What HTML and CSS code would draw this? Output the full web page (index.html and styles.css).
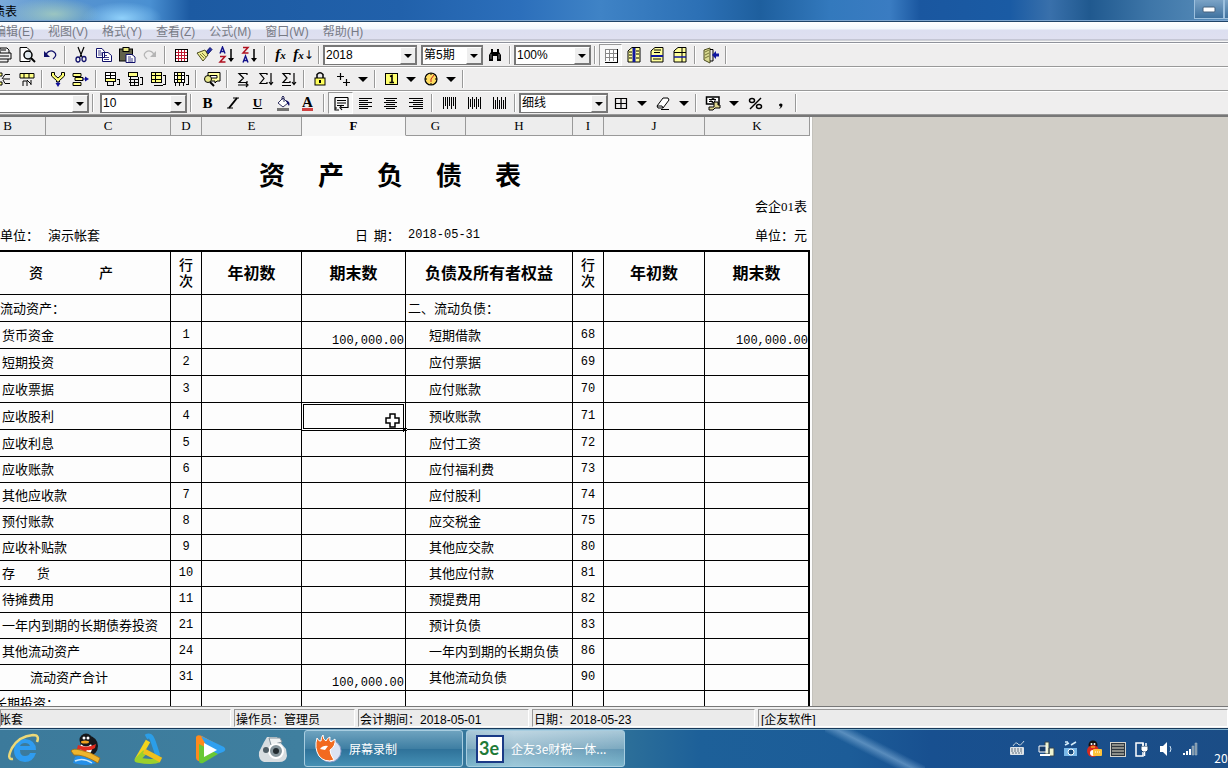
FILE: index.html
```html
<!DOCTYPE html>
<html lang="zh-CN">
<head>
<meta charset="utf-8">
<title>资产负债表</title>
<link rel="stylesheet" href="styles.css">
</head>
<body>
<header class="titlebar">
  <span class="titlebar-text">债表</span>
  <span class="window-buttons">
    <button class="winbtn" aria-label="最小化"><svg width="14" height="8" viewBox="0 0 14 8"><rect x="1" y="2" width="12" height="5" rx="1" fill="#fff" stroke="#45607d"/></svg></button>
    <button class="winbtn" aria-label="最大化"><svg width="14" height="14" viewBox="0 0 14 14"><path d="M1 5V12H12V3H4" fill="#fff" stroke="#45607d"/><rect x="4" y="6" width="5" height="4" fill="#45607d"/></svg></button>
  </span>
</header>
<nav class="menubar">
  <button>编辑(E)</button><button>视图(V)</button><button>格式(Y)</button><button>查看(Z)</button><button>公式(M)</button><button>窗口(W)</button><button>帮助(H)</button>
</nav>

<div class="toolbar">
  <button class="tool" aria-label="打印"><svg viewBox="0 0 18 18"><path d="M5 7V2H12L14 4V7M2 7H16V13H2ZM4 10H14M4 13V16H13V13M6 4H11" fill="none" stroke="#000"/></svg></button>
  <button class="tool" aria-label="打印预览"><svg viewBox="0 0 18 18"><path d="M2 1.500H9L12 4.500V15.500H2Z" fill="#fff" stroke="#000"/><circle cx="10" cy="9" r="4" fill="#dfe8ee" stroke="#000" stroke-width="1.500"/><path d="M13 12L17 16" stroke="#000" stroke-width="2"/></svg></button>
  <button class="tool" aria-label="撤销"><svg viewBox="0 0 18 18"><path d="M5 8Q9 3 13 6T12 13" fill="none" stroke="#10106a" stroke-width="1.300"/><path d="M3 5V11H9Z" fill="#10106a"/></svg></button>
  <i class="sep"></i>
  <button class="tool" aria-label="剪切"><svg viewBox="0 0 18 18"><path d="M6 1L10 11M12 1L8 11" stroke="#000" stroke-width="1.200"/><g fill="none" stroke="#10106a" stroke-width="1.300"><ellipse cx="6" cy="13.500" rx="2" ry="2.500"/><ellipse cx="12" cy="13" rx="2" ry="2.500"/></g></svg></button>
  <button class="tool" aria-label="复制"><svg viewBox="0 0 18 18"><path d="M1.500 2.500H7L9.500 5.500V11.500H1.500ZM7.500 6.500H13L16.500 9.500V15.500H7.500Z" fill="#fff" stroke="#10106a"/><path d="M3 5H6M3 7H7M3 9H7M9 9.500H12M9 11.500H14M9 13.500H14" stroke="#10106a" stroke-width=".8"/></svg></button>
  <button class="tool" aria-label="粘贴"><svg viewBox="0 0 18 18"><rect x="1.500" y="3" width="13" height="12" fill="#62624a" stroke="#000"/><rect x="5" y="1.500" width="6" height="4" fill="#e7e783" stroke="#000"/><path d="M8 8.500H14L17 11V16.500H8Z" fill="#fff" stroke="#10106a"/><path d="M10 11H13M10 13H15M10 15H15" stroke="#10106a" stroke-width=".8"/></svg></button>
  <button class="tool" aria-label="重做"><svg viewBox="0 0 18 18"><path d="M13 8Q9 3 5 6T6 13" fill="none" stroke="#b5b5b5" stroke-width="1.300"/><path d="M15 5V11H9Z" fill="#b5b5b5"/></svg></button>
  <i class="sep"></i>
  <button class="tool" aria-label="表格"><svg viewBox="0 0 18 18" shape-rendering="crispEdges"><rect x="3" y="3" width="13" height="13" fill="#fff"/><path d="M6 3V15M9 3V15M12 3V15M3 6H15M3 9H15M3 12H15" stroke="#c01830"/><path d="M3 3H15V15H3Z" fill="none" stroke="#000"/></svg></button>
  <button class="tool" aria-label="格式刷"><svg viewBox="0 0 18 18"><path d="M11 6L15 1.500L17 3.500L13 8Z" fill="#2434a8" stroke="#10106a"/><path d="M2 7L10 4L13 9L8 15Z" fill="#eeee91" stroke="#4a4a20"/><path d="M5 8L9 12M7 7L11 11" stroke="#777733"/></svg></button>
  <button class="tool" aria-label="升序"><svg viewBox="0 0 18 18"><path d="M2 7.500L4.500 1L7 7.500M3 5.500H6" fill="none" stroke="#10108a" stroke-width="1.400"/><path d="M2 10.500H7L2 16H7.500" fill="none" stroke="#b01020" stroke-width="1.500"/><path d="M13 3V15" stroke="#000" stroke-width="1.500"/><path d="M10 12H16L13 16Z"/></svg></button>
  <button class="tool" aria-label="降序"><svg viewBox="0 0 18 18"><path d="M2 1.500H7L2 7H7.500" fill="none" stroke="#b01020" stroke-width="1.500"/><path d="M2 16.500L4.500 10L7 16.500M3 14.500H6" fill="none" stroke="#10108a" stroke-width="1.400"/><path d="M13 3V15" stroke="#000" stroke-width="1.500"/><path d="M10 12H16L13 16Z"/></svg></button>
  <i class="sep"></i>
  <button class="tool fx">f<small>x</small></button>
  <button class="tool fx">f<small>x</small><b>↓</b></button>
  <i class="sep"></i>
  <span class="combo w94"><select aria-label="年度"><option>2018</option></select><i></i></span>
  <i class="gap"></i>
  <span class="combo w62"><select aria-label="期间"><option>第5期</option></select><i></i></span>
  <button class="tool" aria-label="查找"><svg viewBox="0 0 18 18"><path d="M5 3H7V6H11V3H13V6L15 9V15H11V10H7V15H3V9L5 6Z"/><path d="M5 8V13M13 8V13" stroke="#aaa" stroke-width=".7"/></svg></button>
  <i class="sep"></i>
  <span class="combo w77"><select aria-label="缩放"><option>100%</option></select><i></i></span>
  <i class="sep"></i>
  <button class="tool pressed" aria-label="网格"><svg viewBox="0 0 18 18" shape-rendering="crispEdges"><rect x="3" y="3" width="12" height="12" fill="#fff"/><path d="M7 3V15M11 3V15M3 7H15M3 11H15" stroke="#888"/><path d="M3 15V3H15" fill="none" stroke="#888"/><path d="M15 3V16H3" fill="none" stroke="#000" stroke-width="1"/></svg></button>
  <button class="tool" aria-label="分列"><svg viewBox="0 0 18 18"><path d="M4 4L7 1.500H15V16H3V5Z" fill="#ffff9c" stroke="#000"/><path d="M9 2V16" stroke="#1018a0" stroke-width="3"/><path d="M4 6H7M4 9H7M4 12H7M11 5H14M11 8H14M11 12H14" stroke="#000"/></svg></button>
  <button class="tool" aria-label="分行"><svg viewBox="0 0 18 18"><path d="M4 4L7 1.500H15V16H3V5Z" fill="#ffff9c" stroke="#000"/><path d="M3 10H15" stroke="#1018a0" stroke-width="2"/><path d="M6 4H13M6 6.500H12M5 13H13" stroke="#000"/></svg></button>
  <button class="tool" aria-label="冻结"><svg viewBox="0 0 18 18"><path d="M4 4L7 1.500H15V16H3V5Z" fill="#ffff9c" stroke="#000"/><path d="M11 2V16M3 6.500H15" stroke="#000"/><path d="M3 11H15" stroke="#1018a0" stroke-width="1.500"/></svg></button>
  <i class="sep"></i>
  <button class="tool" aria-label="退出"><svg viewBox="0 0 18 18"><path d="M2 4L8 2V17L2 14Z" fill="#d9d990" stroke="#4a4a20"/><path d="M3 6L7 4M3 9L7 7M3 12L7 10" stroke="#77773a"/><path d="M8 3.500H11V15H8" fill="none" stroke="#000"/><path d="M10 9L14 5V7.500H17V10.500H14V13Z" fill="#1018a0"/></svg></button>
  <i class="sep"></i>
</div>

<div class="toolbar">
  <button class="tool" aria-label="行汇总"><svg viewBox="0 0 18 18"><path d="M1 3H7V6H1ZM1 12H7V15H1Z" fill="#ffff84" stroke="#000"/><path d="M15 4.500H10L7 9M15 9H8M15 13.500H10L8 10" stroke="#000" fill="none"/></svg></button>
  <button class="tool" aria-label="列汇总"><svg viewBox="0 0 18 18"><path d="M2 3.500H16V8H2Z" fill="#ffff84" stroke="#000"/><path d="M6 3V8M11 3V8M5 16V11H9V16M9 10L13 14M13 10V15" fill="none" stroke="#000"/></svg></button>
  <i class="sep"></i>
  <button class="tool" aria-label="合并"><svg viewBox="0 0 18 18"><path d="M2.500 2.500H5.500V5L9 8L12.500 5V2.500H15.500V6L10.500 10.500V12H7.500V10.500L2.500 6Z" fill="#ffff70" stroke="#000"/><path d="M9 11V14" stroke="#10109a"/><path d="M6.500 13H11.500L9 17Z" fill="#10109a"/></svg></button>
  <button class="tool" aria-label="拆分"><svg viewBox="0 0 18 18"><path d="M1 3.500H9V6.500H1ZM3 7.500H11V10.500H3ZM1 12.500H9V15.500H1Z" fill="#ffff84" stroke="#000"/><path d="M10 9H14" stroke="#10109a"/><path d="M13 6.500V11.500L17 9Z" fill="#10109a"/></svg></button>
  <i class="sep"></i>
  <button class="tool" aria-label="插入行"><svg viewBox="0 0 18 18" shape-rendering="crispEdges"><path d="M2.500 2.500H12.500V8.500H2.500Z" fill="#fff" stroke="#000"/><path d="M2.500 8.500H12.500V11.500H2.500Z" fill="#ffff84" stroke="#000"/><path d="M4.500 11.500V15.500H10.500V11.500M7.500 2.500V8.500M2.500 5.500H12.500M14 9.500H16.500V14.500H13.500" fill="none" stroke="#000"/></svg></button>
  <button class="tool" aria-label="追加行"><svg viewBox="0 0 18 18" shape-rendering="crispEdges"><path d="M2.500 2.500H11.500V6.500H2.500Z" fill="#ffff84" stroke="#000"/><path d="M4.500 6.500V15.500H12.500V6.500M2.500 9.500H12.500M2.500 12.500H12.500M8.500 9.500V15.500M14 7.500H16.500V14.500H13.500" fill="none" stroke="#000"/></svg></button>
  <button class="tool" aria-label="插入列"><svg viewBox="0 0 18 18" shape-rendering="crispEdges"><path d="M2.500 2.500H12.500V12.500H2.500Z" fill="#ffff84" stroke="#000"/><path d="M2.500 5.500H12.500M2.500 9.500H12.500M6.500 2.500V12.500M5 15.500H14M14 5.500H16.500V14.500H13.500" fill="none" stroke="#000"/></svg></button>
  <button class="tool" aria-label="追加列"><svg viewBox="0 0 18 18" shape-rendering="crispEdges"><path d="M2.500 2.500H12.500V12.500H2.500Z" fill="#fff" stroke="#000"/><path d="M5.500 2.500H9.500V12.500H5.500Z" fill="#ffff84" stroke="#000"/><path d="M2.500 5.500H12.500M2.500 9.500H12.500M3.500 13V16M7.500 13V16M11.500 13V16M14 5.500H16.500V14.500H13.500" fill="none" stroke="#000"/></svg></button>
  <i class="sep"></i>
  <button class="tool" aria-label="查询"><svg viewBox="0 0 18 18"><path d="M5 2.500H17V11H14L12 13V11H5Z" fill="#ffffa0" stroke="#000"/><path d="M7 5.500H14V8H7Z" fill="#fff" stroke="#000"/><circle cx="5" cy="9" r="3.500" fill="#e9e98c" stroke="#000"/><path d="M7 12L11 16" stroke="#000" stroke-width="2"/></svg></button>
  <i class="sep"></i>
  <button class="tool" aria-label="横向求和"><svg viewBox="0 0 18 18"><path d="M13 5V3.500H5L9.500 8L5 12.500H13V11M4 15H13M12 13L14 15L12 17" fill="none" stroke="#000" stroke-width="1.200"/></svg></button>
  <button class="tool" aria-label="纵向求和"><svg viewBox="0 0 18 18"><path d="M10 5V3.500H3L7 8.500L3 13.500H10V12M14 3V14M12 12L14 14.500L16 12" fill="none" stroke="#000" stroke-width="1.200"/></svg></button>
  <button class="tool" aria-label="双向求和"><svg viewBox="0 0 18 18"><path d="M10 5V3.500H3L7 8L3 12.500H10V11M2 15.500H11M14 3V14M12 12L14 14.500L16 12" fill="none" stroke="#000" stroke-width="1.200"/></svg></button>
  <i class="sep"></i>
  <button class="tool" aria-label="锁定"><svg viewBox="0 0 18 18"><path d="M6 8V4.500Q9 1 12 4.500V8" fill="none" stroke="#000" stroke-width="1.500"/><rect x="4" y="8" width="10" height="7" fill="#ffff5a" stroke="#000"/><path d="M9 10V13" stroke="#000" stroke-width="2"/></svg></button>
  <button class="tool" aria-label="小数"><svg viewBox="0 0 18 18"><path d="M3 6.500H10M6.500 3V10M9 12.500H16M12.500 9V16" stroke="#000" stroke-width="1.200"/></svg></button>
  <button class="drop" aria-label="小数选项"></button>
  <i class="sep"></i>
  <button class="tool" aria-label="页"><svg viewBox="0 0 18 18"><rect x="3.500" y="3.500" width="12" height="11" fill="#ffff70" stroke="#000"/><path d="M8 6.500L10 5.500V12.500M7.500 12.500H12" fill="none" stroke="#000" stroke-width="1.600"/></svg></button>
  <button class="drop" aria-label="页选项"></button>
  <button class="tool" aria-label="时间"><svg viewBox="0 0 18 18"><circle cx="9" cy="9" r="6" fill="#ffdc60" stroke="#000" stroke-width="1.200"/><path d="M9 3V5M9 13V15M3 9H5M13 9H15" stroke="#000"/><path d="M9 9L12 5M9 9V12" stroke="#c02020"/></svg></button>
  <button class="drop" aria-label="时间选项"></button>
  <i class="sep"></i>
</div>

<div class="toolbar format">
  <span class="combo font"><select aria-label="字体"><option> </option></select><i></i></span>
  <i class="sep"></i><i class="gap narrow"></i>
  <span class="combo w87"><select aria-label="字号"><option>10</option></select><i></i></span>
  <i class="sep"></i>
  <button class="tool glyph"><b>B</b></button>
  <button class="tool" aria-label="斜体"><svg viewBox="0 0 18 18"><path d="M9 4H15M3 14H9" stroke="#000"/><path d="M13 4L5 14" stroke="#000" stroke-width="2"/></svg></button>
  <button class="tool glyph"><u>U</u></button>
  <button class="tool" aria-label="填充"><svg viewBox="0 0 18 18"><path d="M4 9L9 4L14 9L9 13Z" fill="#fff" stroke="#303060"/><path d="M8 6V3Q9 1 10 3V8" fill="none" stroke="#303060"/><path d="M12 6Q17 8 15 12L13 9Z" fill="#10106a"/><rect x="3" y="14" width="12" height="3" fill="#737373"/></svg></button>
  <button class="tool glyph red"><b>A</b></button>
  <i class="sep"></i>
  <button class="tool pressed" aria-label="自动换行"><svg viewBox="0 0 18 18"><path d="M3 3.500H16M3 3.500V11.500M16 3.500V13.500H9M3 14H5M5 6.500H14M5 9H14M5 11.500H12M10 11L8 13.500L10 16M3 11.500V16H7" fill="none" stroke="#000" stroke-width="1.200"/></svg></button>
  <button class="tool" aria-label="左对齐"><svg viewBox="0 0 18 18" shape-rendering="crispEdges"><path d="M2 4.500H15M2 6.500H11M2 8.500H15M2 10.500H11M2 12.500H15M2 14.500H11" stroke="#000"/></svg></button>
  <button class="tool" aria-label="居中"><svg viewBox="0 0 18 18" shape-rendering="crispEdges"><path d="M2 4.500H15M4 6.500H13M2 8.500H15M4 10.500H13M2 12.500H15M4 14.500H13" stroke="#000"/></svg></button>
  <button class="tool" aria-label="右对齐"><svg viewBox="0 0 18 18" shape-rendering="crispEdges"><path d="M2 4.500H16M6 6.500H16M2 8.500H16M6 10.500H16M2 12.500H16M6 14.500H16" stroke="#000"/></svg></button>
  <i class="sep"></i>
  <button class="tool" aria-label="顶端对齐"><svg viewBox="0 0 18 18" shape-rendering="crispEdges"><path d="M3.500 3V15M5.500 3V12M7.500 3V15M9.500 3V12M11.500 3V15M13.500 3V12M15.500 3V15" stroke="#000"/></svg></button>
  <button class="tool" aria-label="垂直居中"><svg viewBox="0 0 18 18" shape-rendering="crispEdges"><path d="M3.500 3V15M5.500 5V13M7.500 3V15M9.500 5V13M11.500 3V15M13.500 5V13M15.500 3V15" stroke="#000"/></svg></button>
  <button class="tool" aria-label="底端对齐"><svg viewBox="0 0 18 18" shape-rendering="crispEdges"><path d="M3.500 3V15M5.500 6V15M7.500 3V15M9.500 6V15M11.500 3V15M13.500 6V15M15.500 3V15" stroke="#000"/></svg></button>
  <i class="sep"></i>
  <span class="combo w89"><select aria-label="线型"><option>细线</option></select><i></i></span>
  <button class="tool" aria-label="边框"><svg viewBox="0 0 18 18"><path d="M3.500 4.500H14.500V14.500H3.500ZM9 4.500V14.500M3.500 9.500H14.500" fill="none" stroke="#000" stroke-width="1.200"/></svg></button>
  <button class="drop" aria-label="边框选项"></button>
  <button class="tool" aria-label="擦除"><svg viewBox="0 0 18 18"><path d="M3 12L9 4H14L15 6L9 14H4Z" fill="#fff" stroke="#000"/><path d="M9 14L8 12H3M7 15.500H15" fill="none" stroke="#000"/></svg></button>
  <button class="drop" aria-label="擦除选项"></button>
  <i class="sep"></i>
  <button class="tool" aria-label="货币"><svg viewBox="0 0 18 18"><path d="M2.500 3H15V10H2.500Z" fill="#fff" stroke="#000" stroke-width="1.500"/><path d="M5 5.500H12M5 7.500H9" fill="none" stroke="#000"/><circle cx="9" cy="6.500" r="2" fill="none" stroke="#000"/><path d="M10 8H14V11H16V14H11L9 16H5V13H10Z" fill="#ddd590" stroke="#000"/></svg></button>
  <button class="drop" aria-label="货币选项"></button>
  <button class="tool" aria-label="百分比"><svg viewBox="0 0 18 18"><path d="M4 15L15 4" stroke="#000" stroke-width="1.500"/><g fill="none" stroke="#000" stroke-width="1.500"><ellipse cx="6" cy="6.500" rx="2.500" ry="2"/><ellipse cx="13" cy="12.500" rx="2.500" ry="2"/></g></svg></button>
  <button class="tool" aria-label="千分位"><svg viewBox="0 0 18 18"><path d="M8 10.500Q10 8.500 11.500 10.500Q11.500 13.500 8 15Q10 13 9.500 12.500Q8 12.500 8 10.500"/></svg></button>
  <i class="sep"></i>
</div>

<main class="workspace">
  <div class="sheet">
  <table class="grid">
    <colgroup><col class="c-b"><col class="c-c"><col class="c-no"><col class="c-e"><col class="c-f"><col class="c-g"><col class="c-h"><col class="c-no"><col class="c-j"><col class="c-k"></colgroup>
    <thead>
      <tr><th class="lead">B</th><th>C</th><th>D</th><th>E</th><th class="current">F</th><th>G</th><th>H</th><th>I</th><th>J</th><th>K</th></tr>
    </thead>
    <tbody class="caption">
      <tr class="r-title"><td colspan="10"><h1><span>资</span><span>产</span><span>负</span><span>债</span><span>表</span></h1></td></tr>
      <tr class="r-form"><td colspan="10">会企<span class="half">01</span>表</td></tr>
      <tr class="r-info"><td colspan="4"><div class="info"><span>单位：</span><span>演示帐套</span></div></td><td class="date-label">日&nbsp; 期：</td><td colspan="2" class="num date">2018-05-31</td><td colspan="3" class="unit">单位：元</td></tr>
    </tbody>
    <tbody class="heads">
      <tr><td colspan="2"><div class="asset"><span>资</span><span>产</span></div></td><td class="stack">行<br>次</td><td>年初数</td><td>期末数</td><td colspan="2">负债及所有者权益</td><td class="stack">行<br>次</td><td>年初数</td><td>期末数</td></tr>
    </tbody>
    <tbody class="lines tall">
      <tr><td colspan="2" class="group">流动资产：</td><td></td><td></td><td></td><td colspan="2" class="group">二、流动负债：</td><td></td><td></td><td></td></tr>
      <tr><td colspan="2">货币资金</td><td>1</td><td></td><td>100,000.00</td><td colspan="2">短期借款</td><td>68</td><td></td><td>100,000.00</td></tr>
      <tr><td colspan="2">短期投资</td><td>2</td><td></td><td></td><td colspan="2">应付票据</td><td>69</td><td></td><td></td></tr>
      <tr><td colspan="2">应收票据</td><td>3</td><td></td><td></td><td colspan="2">应付账款</td><td>70</td><td></td><td></td></tr>
      <tr><td colspan="2">应收股利</td><td>4</td><td></td><td class="selected"><div class="selection"><svg class="cursor" width="16" height="16" viewBox="0 0 16 16"><path d="M5 1H10V5H14V10H10V14H5V10H1V5H5Z" fill="#fff" stroke="#000" stroke-width="1.500"/></svg><i class="handle"></i></div></td><td colspan="2">预收账款</td><td>71</td><td></td><td></td></tr>
      <tr><td colspan="2">应收利息</td><td>5</td><td></td><td></td><td colspan="2">应付工资</td><td>72</td><td></td><td></td></tr>
    </tbody>
    <tbody class="lines">
      <tr><td colspan="2">应收账款</td><td>6</td><td></td><td></td><td colspan="2">应付福利费</td><td>73</td><td></td><td></td></tr>
      <tr><td colspan="2">其他应收款</td><td>7</td><td></td><td></td><td colspan="2">应付股利</td><td>74</td><td></td><td></td></tr>
      <tr><td colspan="2">预付账款</td><td>8</td><td></td><td></td><td colspan="2">应交税金</td><td>75</td><td></td><td></td></tr>
      <tr><td colspan="2">应收补贴款</td><td>9</td><td></td><td></td><td colspan="2">其他应交款</td><td>80</td><td></td><td></td></tr>
      <tr><td colspan="2">存　&nbsp;&nbsp;&nbsp;货</td><td>10</td><td></td><td></td><td colspan="2">其他应付款</td><td>81</td><td></td><td></td></tr>
      <tr><td colspan="2">待摊费用</td><td>11</td><td></td><td></td><td colspan="2">预提费用</td><td>82</td><td></td><td></td></tr>
      <tr><td colspan="2">一年内到期的长期债券投资</td><td>21</td><td></td><td></td><td colspan="2">预计负债</td><td>83</td><td></td><td></td></tr>
      <tr><td colspan="2">其他流动资产</td><td>24</td><td></td><td></td><td colspan="2">一年内到期的长期负债</td><td>86</td><td></td><td></td></tr>
      <tr><td colspan="2" class="total">流动资产合计</td><td>31</td><td></td><td>100,000.00</td><td colspan="2">其他流动负债</td><td>90</td><td></td><td></td></tr>
      <tr><td colspan="2" class="cut">长期投资：</td><td></td><td></td><td></td><td colspan="2"></td><td></td><td></td><td></td></tr>
    </tbody>
  </table>
  </div>
</main>

<footer class="status">
  <span class="s-book">帐套</span>
  <span class="s-user">操作员：管理员</span>
  <span class="s-period">会计期间：<b>2018-05-01</b></span>
  <span class="s-date">日期：<b>2018-05-23</b></span>
  <span class="s-soft"><b>[</b>企友软件<b>]</b></span>
</footer>

<div class="taskbar">
  <div class="pins">
    <button aria-label="Internet Explorer"><svg width="34" height="34" viewBox="0 0 34 34"><path d="M29 18H13Q13 24 18 24Q22 24 23 21H29Q26 30 18 30Q7 29 7 18Q8 8 18 7Q29 8 29 18M13 14H23Q22 11 18 11Q14 11 13 14" fill="#2f9cf0" fill-rule="evenodd"/><path d="M6 27Q-1 28 5 16Q12 4 26 3Q33 3 30 10" fill="none" stroke="#ecd878" stroke-width="2.500"/></svg></button>
    <button aria-label="QQ"><svg width="34" height="34" viewBox="0 0 34 34"><ellipse cx="20" cy="14" rx="9" ry="10" fill="#16181c"/><ellipse cx="17" cy="16" rx="6" ry="7" fill="#fff"/><circle cx="17" cy="8" r="6.500" fill="#16181c"/><path d="M9 13Q18 17 27 12L26 16Q21 19 18 18L15 22L13 18L8 17Z" fill="#e02c20"/><circle cx="15" cy="6" r="1.500" fill="#fff"/><circle cx="19" cy="6" r="1.500" fill="#fff"/><ellipse cx="16" cy="10" rx="4" ry="1.500" fill="#f0a020"/><path d="M6 25Q16 21 27 31Q18 35 4 31Z" fill="#258fe8"/><path d="M6 29Q14 25 23 31" fill="none" stroke="#c6e8ff" stroke-width="1.500"/><path d="M2 19Q4 16 11 18Q22 20 31 26L29 31Q14 22 5 23Z" fill="#efb52d" stroke="#a36e12" stroke-width=".8"/></svg></button>
    <button aria-label="输入助手"><svg width="34" height="34" viewBox="0 0 34 34"><g fill="none" stroke-width="5" stroke-linejoin="round"><path d="M6 28L17 9" stroke="#f2d41c"/><path d="M15 5Q20 2 22 9L27 24" stroke="#2b9ee8"/><path d="M28 28Q22 31 6 28L14 20" stroke="#9bd02c"/><path d="M13 19L30 28" stroke="#f0c01c"/></g></svg></button>
    <button aria-label="播放器"><svg width="34" height="34" viewBox="0 0 34 34"><path d="M3 5Q4 2 9 4L20 10L9 29Q4 30 3 26Z" fill="#ff8a1c"/><path d="M8 4L31 15Q34 18 30 20L19 24Z" fill="#2fa0f0"/><path d="M6 29V12L25 22L10 31Q6 32 6 29" fill="#69c834"/><path d="M11 11L24 18L11 25Z" fill="#fff"/></svg></button>
    <button aria-label="录像"><svg width="34" height="34" viewBox="0 0 34 34"><path d="M4 20L9 10L12 5H22L24 9L31 17L32 24Q31 30 24 30H9Q3 28 4 20" fill="#d8dde0"/><path d="M14 6H25L27 10L16 13Z" fill="#eff2f3" stroke="#81909a"/><circle cx="21" cy="19" r="7" fill="#86959c" stroke="#fff" stroke-width="2"/><circle cx="21" cy="19" r="3" fill="#222b30"/><circle cx="11" cy="18" r="3" fill="#505e66"/></svg></button>
  </div>
  <button class="task"><svg width="30" height="30" viewBox="0 0 30 30"><circle cx="17" cy="17" r="11" fill="#dce2f2" stroke="#8b9ac8"/><path d="M4 4Q6 8 8 7Q8 3 10 1Q10 6 13 7Q14 4 17 3Q16 7 18 8L22 5Q23 12 17 16Q17 20 21 26Q12 29 6 22Q1 14 4 4" fill="#f26a20" stroke="#fff"/><path d="M7 15Q10 11 15 12L12 16Z" fill="#fff"/></svg>屏幕录制</button>
  <button class="task active"><svg width="30" height="30" viewBox="0 0 30 30"><rect x="2" y="2" width="26" height="26" fill="#fff" stroke="#1a3a86" stroke-width="2"/><text x="4" y="21" class="logo">3e</text></svg>企友3e财税一体...</button>
  <div class="tray">
    <svg viewBox="0 0 18 18"><path d="M5 6Q8 1 10 4T16 1" fill="none" stroke="#c6d4de"/><rect x="2" y="7" width="14" height="8" rx="1" fill="#dde3e8"/><path d="M3 9H15M3 11H15M4 13H14" stroke="#61717e" stroke-dasharray="2 1"/></svg>
    <svg viewBox="0 0 18 18"><path d="M8 2H12V14H8ZM12 8H17V16H12Z" fill="#eef3d0" stroke="#35454f"/><path d="M2 6H9V12H2Z" fill="#153a66" stroke="#fff"/><path d="M3 15H13" stroke="#fff" stroke-width="2"/></svg>
    <svg viewBox="0 0 18 18"><path d="M3 8H16V16H3Z" fill="#79b8e8"/><circle cx="10" cy="12" r="3" fill="#164778" stroke="#fff"/><path d="M4 5L8 3M10 5L15 2M4 2H7" stroke="#d5edfb" stroke-width="1.500"/></svg>
    <svg viewBox="0 0 18 18"><circle cx="8" cy="5" r="4.500" fill="#111"/><ellipse cx="8" cy="11" rx="6" ry="6" fill="#d92a1e"/><ellipse cx="8" cy="13" rx="3" ry="3" fill="#fff"/><circle cx="6.500" cy="4" r="1" fill="#fff"/><circle cx="9.500" cy="4" r="1" fill="#fff"/><path d="M6 7H10" stroke="#f0a020" stroke-width="1.500"/><rect x="8" y="9" width="9" height="7" rx="1" fill="#ffc238"/><path d="M10 12H15" stroke="#fff" stroke-dasharray="1 1"/></svg>
    <svg viewBox="0 0 18 18"><rect x="1.500" y="2.500" width="15" height="14" fill="#303840" stroke="#d5d5cf"/><path d="M3 5H15M3 8H15M3 11H15M3 14H15" stroke="#a9a9a0" stroke-width="1.500"/></svg>
    <svg viewBox="0 0 18 18"><path d="M3 3H10V16H3Z" fill="none" stroke="#fff" stroke-width="1.500"/><path d="M8 6H15V10L13 12H10L8 10Z" fill="#fff" stroke="#24466b"/><path d="M10 3V6M13 3V6M11.500 12V16" stroke="#fff" stroke-width="1.500"/></svg>
    <svg viewBox="0 0 18 18"><path d="M3 6H6L10 2V16L6 12H3Z" fill="#fff"/><path d="M13 6Q15 9 13 12" stroke="#cfe3f3" fill="none"/></svg>
    <svg viewBox="0 0 18 18"><path d="M2 13H4V15H2ZM5 11H7V15H5ZM8 9H10V15H8Z" fill="#fff"/><path d="M11 6H13V15H11ZM14 3H16V15H14Z" fill="#7b93a8" stroke="#a9bccb" stroke-width=".5"/></svg>
    <span class="clock">2018</span>
  </div>
</div>
</body>
</html>
```
FILE: styles.css
```css
* { box-sizing: border-box; }

body {
  margin: 0;
  height: 100vh;
  overflow: hidden;
  display: flex;
  flex-direction: column;
  background: #ededed;
  color: #000;
  font-family: "Noto Sans CJK SC", sans-serif;
  font-size: 13px;
}

button {
  border: 0;
  padding: 0;
  margin: 0;
  background: none;
  font: inherit;
  color: inherit;
}

/* Title bar */
.titlebar {
  flex: none;
  height: 22px;
  display: flex;
  justify-content: space-between;
  overflow: hidden;
  border-bottom: 1px solid #1f4468;
  box-shadow: inset 0 -1px #7ea6cf;
  background:
    radial-gradient(ellipse 46px 16px at 54px 14px, rgba(165, 205, 190, .85), transparent),
    radial-gradient(ellipse 40px 16px at 122px 18px, rgba(150, 215, 255, .9), transparent),
    linear-gradient(90deg, #7aaad8 0, #5793d0 70px, #4a90d2 150px, #1c5aa2 190px, #2161ab 400px, #2c6fbb 520px, #3f83c6 600px, #2c70b5 700px, #1e5f9e 760px, #3379bd 830px, #3a7cc2 890px, #1a57a0 920px, #1a5ba4 1010px, #3970ab 1050px, #20598f 1090px, #3e76a8 1150px, #5b8fbb 100%);
}
.titlebar-text { line-height: 21px; font-size: 12px; margin-left: -7px; }
.window-buttons { display: flex; margin-right: -26px; }
.winbtn {
  width: 30px;
  height: 19px;
  border: 1px solid #9cc0de;
  border-top: 0;
  background: linear-gradient(#7ba3c6, #3f729f);
  display: grid;
  place-items: center;
}

/* Menu */
.menubar {
  flex: none;
  height: 21px;
  display: flex;
  margin-left: -13px;
  overflow: hidden;
  color: #777a85;
  font-family: "Liberation Sans", "Noto Sans CJK SC", sans-serif;
  font-size: 12px;
  background: linear-gradient(#fff 0, #f3f8fd 7px, #dcdff0 8px, #dfe0f0 17px, #a9acb8 18px, #f6f6f6 19px, #f6f6f6 20px, #8f929b 20px);
}
.menubar button { padding: 0 7px; line-height: 18px; height: 19px; }

/* Tool bars */
.toolbar {
  flex: none;
  height: 24px;
  display: flex;
  align-items: center;
  padding-right: 8px;
  border-top: 1px solid #fff;
  border-bottom: 1px solid #999;
  background: #efeeee;
}
.toolbar > :first-child { margin-left: -8px; }
.tool {
  flex: none;
  width: 23px;
  height: 22px;
  display: grid;
  place-items: center;
  align-content: center;
}
.tool svg { width: 18px; height: 18px; }
.format .tool { width: 25px; }
.tool.pressed { border: 1px solid #999; border-right-color: #fff; border-bottom-color: #fff; background: #f7f7f7; }
.tool.fx {
  display: flex;
  align-items: baseline;
  justify-content: center;
  font: italic bold 15px "Liberation Serif", serif;
  line-height: 20px;
}
.tool.fx small { font-size: 11px; }
.tool.fx b { font: 12px "DejaVu Sans", sans-serif; }
.tool.glyph { font: 15px/18px "Liberation Serif", serif; }
.tool.glyph u { font-weight: bold; font-size: 13px; }
.tool.red b { border-bottom: 3px solid #d04040; line-height: 12px; }
.drop { flex: none; width: 17px; height: 22px; display: grid; place-items: center; }
.drop::before, .combo i::before {
  content: "";
  border: 5px solid transparent;
  border-top-color: #000;
  border-bottom: 0;
}
.sep { flex: none; width: 8px; height: 18px; background: linear-gradient(90deg, transparent 3px, #999 3px, #999 4px, #fff 4px, #fff 5px, transparent 5px); }
.gap { flex: none; width: 4px; }
.gap.narrow { width: 3px; }

.combo {
  flex: none;
  height: 20px;
  display: flex;
  border: 1px solid #777;
  border-width: 2px 1px 1px 2px;
  background: #fff;
}
.combo select {
  flex: 1;
  min-width: 0;
  appearance: none;
  border: 0;
  padding: 0 0 0 1px;
  margin: 0;
  background: #fff;
  color: #000;
  font: 12px/15px "Liberation Sans", "Noto Sans CJK SC", sans-serif;
}
.combo i {
  flex: none;
  width: 16px;
  display: grid;
  place-items: center;
  background: #eee;
  border: 1px solid #fff;
  border-right-color: #777;
  border-bottom-color: #777;
  pointer-events: none;
}
.combo i::before { border-width: 4px 4px 0; }
.w94 { width: 94px; }
.w62 { width: 62px; }
.w77 { width: 77px; }
.w87 { width: 87px; }
.w89 { width: 89px; }
.combo.font { width: 97px; }

/* Sheet */
.workspace {
  flex: 1;
  min-height: 0;
  overflow: hidden;
  border-top: 2px solid #777;
  border-bottom: 1px solid #777;
  background: #d1cec7;
}
.sheet { width: 813px; height: 100%; overflow: hidden; background: #fdfdfd; border-right: 1px solid #c4c2bc; }
.grid { width: 810px; table-layout: fixed; border-collapse: separate; border-spacing: 0; }
.c-b { width: 46px; }
.c-c { width: 125px; }
.c-no { width: 31px; }
.c-e { width: 100px; }
.c-f { width: 104px; }
.c-g { width: 60px; }
.c-h { width: 107px; }
.c-j { width: 101px; }
.c-k { width: 105px; }
.grid td, .grid th { padding: 0; }
.grid thead tr { height: 19px; }
.grid th {
  font: 13px/16px "Liberation Serif", serif;
  background: #ededed;
  border-right: 1px solid #999;
  border-bottom: 1px solid #999;
}
.grid th.lead { padding-right: 30px; }
.grid th.current { font-weight: bold; background: #f6f6f6; border-bottom-color: #f6f6f6; }

.r-title { height: 56px; }
.grid .r-title td { padding: 21px 30px 1px 0; }
h1 { margin: 0; display: flex; justify-content: center; gap: 33px; font-size: 26px; line-height: 34px; font-weight: bold; }
.r-form { height: 28px; text-align: right; }
.grid .r-form td, .grid .r-info td { padding-bottom: 2px; }
.grid .r-form td, .grid td.unit { padding-right: 3px; }
.r-info { height: 30px; }
.info { display: flex; gap: 9px; }
.grid td.date-label { padding-left: 53px; white-space: nowrap; }
.grid td.date { padding: 0 0 0 2px; }
.grid td.unit { text-align: right; }
.half { font: 13px "Liberation Serif", serif; }
.num { font: 12px "Liberation Mono", monospace; }

.heads td, .lines td { border-right: 1px solid #000; border-bottom: 1px solid #000; }
.heads tr { height: 45px; }
.grid .heads td { padding-bottom: 2px; border-top: 2px solid #000; text-align: center; font-size: 16px; line-height: 18px; font-weight: bold; white-space: nowrap; }
.grid .heads .stack, .asset { font-size: 14px; line-height: 16px; font-weight: 500; }
.asset { display: flex; gap: 56px; padding-left: 29px; }
.heads td:last-child, .lines td:last-child { border-right-width: 2px; }

.lines tr { height: 26px; }
.lines.tall tr { height: 27px; }
.lines td { line-height: 18px; white-space: nowrap; }
.grid .lines:not(.tall) td { padding-bottom: 1px; }
.grid .lines td:nth-child(1) { padding-left: 2px; }
.grid .lines td:nth-child(5) { padding-left: 23px; }
.lines td:nth-child(2), .lines td:nth-child(6) { text-align: center; font: 12px "Liberation Mono", monospace; }
.lines td:nth-child(4), .lines td:nth-child(8) { text-align: right; vertical-align: bottom; font: 12px/14px "Liberation Mono", monospace; }
.grid .lines td:nth-child(4) { padding: 0 1px 0 0; }
.grid .lines td.group:nth-child(1) { padding-left: 0; }
.grid .lines td.group:nth-child(5) { padding-left: 2px; }
.grid .lines td.total:nth-child(1) { padding-left: 30px; }
.grid .lines td.cut:nth-child(1) { padding-left: 0; text-indent: -6px; }

td.selected { position: relative; }
.selection {
  position: absolute;
  inset: -1px -1px -2px;
  border: 1px solid #000;
  box-shadow: inset 0 0 0 1px #fff, inset 0 0 0 2px #000;
}
.cursor { position: absolute; right: 4px; bottom: 1px; }
.handle { position: absolute; right: -2px; bottom: -2px; width: 5px; height: 5px; background: #000; border: 1px dotted #fff; }

/* Status bar */
.status {
  flex: none;
  height: 21px;
  display: flex;
  gap: 3px;
  padding-top: 2px;
  background: #efefef;
  font-size: 12px;
  line-height: 17px;
  white-space: nowrap;
}
.status span {
  border: 1px solid #999;
  border-right-color: #fff;
  border-bottom-color: #fff;
  padding-left: 1px;
  overflow: hidden;
  height: 18px;
  background: #ebebeb;
}
.status b { font: 12px "Liberation Sans", sans-serif; }
.s-book { width: 231px; text-indent: -3px; }
.s-user { width: 121px; }
.s-period { width: 171px; }
.s-date { width: 223px; }
.status .s-soft { flex: 1; padding-left: 2px; }

/* Task bar */
.taskbar {
  flex: none;
  height: 40px;
  display: flex;
  align-items: stretch;
  border-top: 1px solid #17395a;
  box-shadow: inset 0 1px #7fb0cc;
  background:
    linear-gradient(27deg, transparent 40%, rgba(130, 175, 215, .6) 50%, transparent 60%) 825px 0 / 100px 40px no-repeat,
    linear-gradient(90deg, #3c7a9b 0, #3f7f9f 300px, #2d7099 620px, #1d6099 700px, #1c5c98 850px, #185090 930px, #1b4d86 100%);
}
.pins { display: flex; gap: 28px; padding-left: 7px; width: 304px; align-items: center; }
.pins button { height: 34px; }
.task {
  flex: none;
  width: 159px;
  margin: 1px 3px 1px 0;
  display: flex;
  align-items: center;
  gap: 6px;
  padding-left: 8px;
  overflow: hidden;
  white-space: nowrap;
  font-size: 12px;
  color: #fff;
  border: 1px solid #a7cde0;
  border-radius: 3px;
  background: linear-gradient(#6ea3bf, #3f7fa3 50%, #2e7199 51%, #4590b4);
}
.task.active { background: linear-gradient(90deg, rgba(255, 255, 255, 0), rgba(255, 255, 255, .25) 30%, rgba(255, 255, 255, 0)), linear-gradient(#a8c8d8, #7ca9c0 50%, #6297b4 51%, #7cb6cc); }
.logo { font: bold 18px Lato, sans-serif; fill: #1f7a38; }
.tray { margin-left: auto; display: flex; align-items: center; gap: 6px; margin-right: -13px; }
.tray svg { flex: none; width: 18px; height: 18px; }
.tray svg:first-child { margin-right: 5px; }
.clock { color: #fff; font-size: 12px; line-height: 16px; padding-left: 9px; align-self: flex-end; margin-bottom: 2px; }
```
